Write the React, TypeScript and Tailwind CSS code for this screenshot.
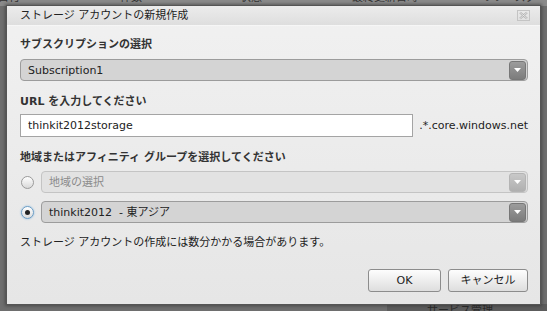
import React from "react";

const font = { fontFamily: '"DejaVu Sans", "Noto Sans CJK JP", sans-serif' };

function Arrow({ light }: { light?: boolean }) {
  return (
    <span
      className={`flex h-[19px] w-[17px] shrink-0 items-center justify-center rounded-[3px] border ${
        light ? "border-[#b4b4b4] bg-gradient-to-b from-[#c8c8c8] to-[#b0b0b0]" : "border-[#777] bg-gradient-to-b from-[#9c9c9c] to-[#7c7c7c]"
      }`}
    >
      <svg width="7" height="4" viewBox="0 0 7 4">
        <path d="M0 0h7L3.5 4z" fill="#fff" />
      </svg>
    </span>
  );
}

function Select({ text, disabled, className = "" }: { text: string; disabled?: boolean; className?: string }) {
  return (
    <div
      className={`flex h-[22px] items-center justify-between rounded-[4px] border pl-[7px] pr-px ${
        disabled ? "border-[#c4c4c4] bg-[#e2e2e2] text-[#8a8a8a]" : "border-[#9c9c9c] bg-[#d4d4d4] text-[#222]"
      } ${className}`}
    >
      <span className="whitespace-pre text-[11px] leading-none">{text}</span>
      <Arrow light={disabled} />
    </div>
  );
}

function Radio({ checked }: { checked?: boolean }) {
  return (
    <span
      className={`flex h-[13px] w-[13px] shrink-0 items-center justify-center rounded-full border ${
        checked ? "border-[#6a9cc4] bg-gradient-to-b from-[#fff] to-[#dcdcdc] shadow-[0_0_2px_#7fb6e0]" : "border-[#9a9a9a] bg-gradient-to-b from-[#fff] to-[#d8d8d8]"
      }`}
    >
      {checked && <span className="h-[5px] w-[5px] rounded-full bg-[#222]" />}
    </span>
  );
}

export default function App() {
  return (
    <div className="relative h-[311px] w-[547px] overflow-hidden bg-[#6e6e6e] text-[#222]" style={font}>
      {/* page behind the dialog */}
      <div className="flex h-[6px] items-end bg-[#8a8a8a] text-[11px] leading-none text-[#333]">
        <span className="ml-[-2px] w-[122px] translate-y-[-3px]">日付</span>
        <span className="w-[120px] translate-y-[-3px]">件数</span>
        <span className="w-[112px] translate-y-[-3px]">状態</span>
        <span className="w-[130px] translate-y-[-3px]">最終更新日時</span>
        <span className="translate-y-[-3px]">リソースグ</span>
      </div>
      <div className="absolute bottom-0 right-0 flex h-[7px] w-[160px] items-start bg-[#5c5c5c] pl-[40px] text-[11px] leading-none text-[#2a2a2a]">
        <span className="translate-y-[1px]">サービス管理</span>
      </div>

      {/* dialog */}
      <div className="absolute left-[6px] top-[5px] flex h-[300px] w-[535px] flex-col border border-[#555] bg-gradient-to-b from-[#f1f1f1] to-[#e6e6e6] shadow-[0_0_3px_1px_rgba(40,40,40,0.5)]">
        <div className="flex h-[20px] shrink-0 items-center justify-between border-b border-[#f6f6f6] bg-gradient-to-b from-[#ececec] to-[#dedede] pl-[13px] pr-[10px]">
          <span className="text-[11px] leading-none text-[#222]">ストレージ アカウントの新規作成</span>
          <svg width="13" height="11" viewBox="0 0 13 11">
            <rect x="0.5" y="0.5" width="12" height="10" fill="none" stroke="#c4c4c4" />
            <path d="M3 2.5l7 6M10 2.5l-7 6" stroke="#b0b0b0" strokeWidth="2.2" />
            <path d="M3 2.5l7 6M10 2.5l-7 6" stroke="#eee" strokeWidth="0.8" />
          </svg>
        </div>

        <div className="flex flex-1 flex-col pl-[13px] pr-[12px]">
          <div className="mt-[13px] text-[11px] font-bold leading-none text-[#333]">サブスクリプションの選択</div>
          <Select text="Subscription1" className="mt-[9px]" />

          <div className="mt-[15px] text-[11px] font-bold leading-none text-[#333]">URL を入力してください</div>
          <div className="mt-[7px] flex items-center">
            <div className="flex h-[23px] w-[394px] items-center border border-[#a4a4a4] bg-white pl-[7px] text-[11px] leading-none">
              thinkit2012storage
            </div>
            <span className="ml-[6px] text-[11px] leading-none">.*.core.windows.net</span>
          </div>

          <div className="mt-[15px] text-[11px] font-bold leading-none text-[#333]">地域またはアフィニティ グループを選択してください</div>
          <div className="mt-[8px] flex items-center gap-[7px] pl-px">
            <Radio />
            <Select text="地域の選択" disabled className="flex-1" />
          </div>
          <div className="mt-[8px] flex items-center gap-[7px] pl-px">
            <Radio checked />
            <Select text="thinkit2012  - 東アジア" className="flex-1" />
          </div>

          <div className="mt-[14px] text-[11px] leading-none text-[#222]">ストレージ アカウントの作成には数分かかる場合があります。</div>

          <div className="mt-[21px] flex justify-end gap-[7px]">
            <button className="h-[23px] w-[73px] rounded-[3px] border border-[#8c8c8c] bg-gradient-to-b from-[#fdfdfd] to-[#dedede] text-[11px] leading-none text-[#222]">
              OK
            </button>
            <button className="h-[23px] w-[80px] rounded-[3px] border border-[#8c8c8c] bg-gradient-to-b from-[#fdfdfd] to-[#dedede] text-[11px] leading-none text-[#222]">
              キャンセル
            </button>
          </div>
        </div>
      </div>
    </div>
  );
}
